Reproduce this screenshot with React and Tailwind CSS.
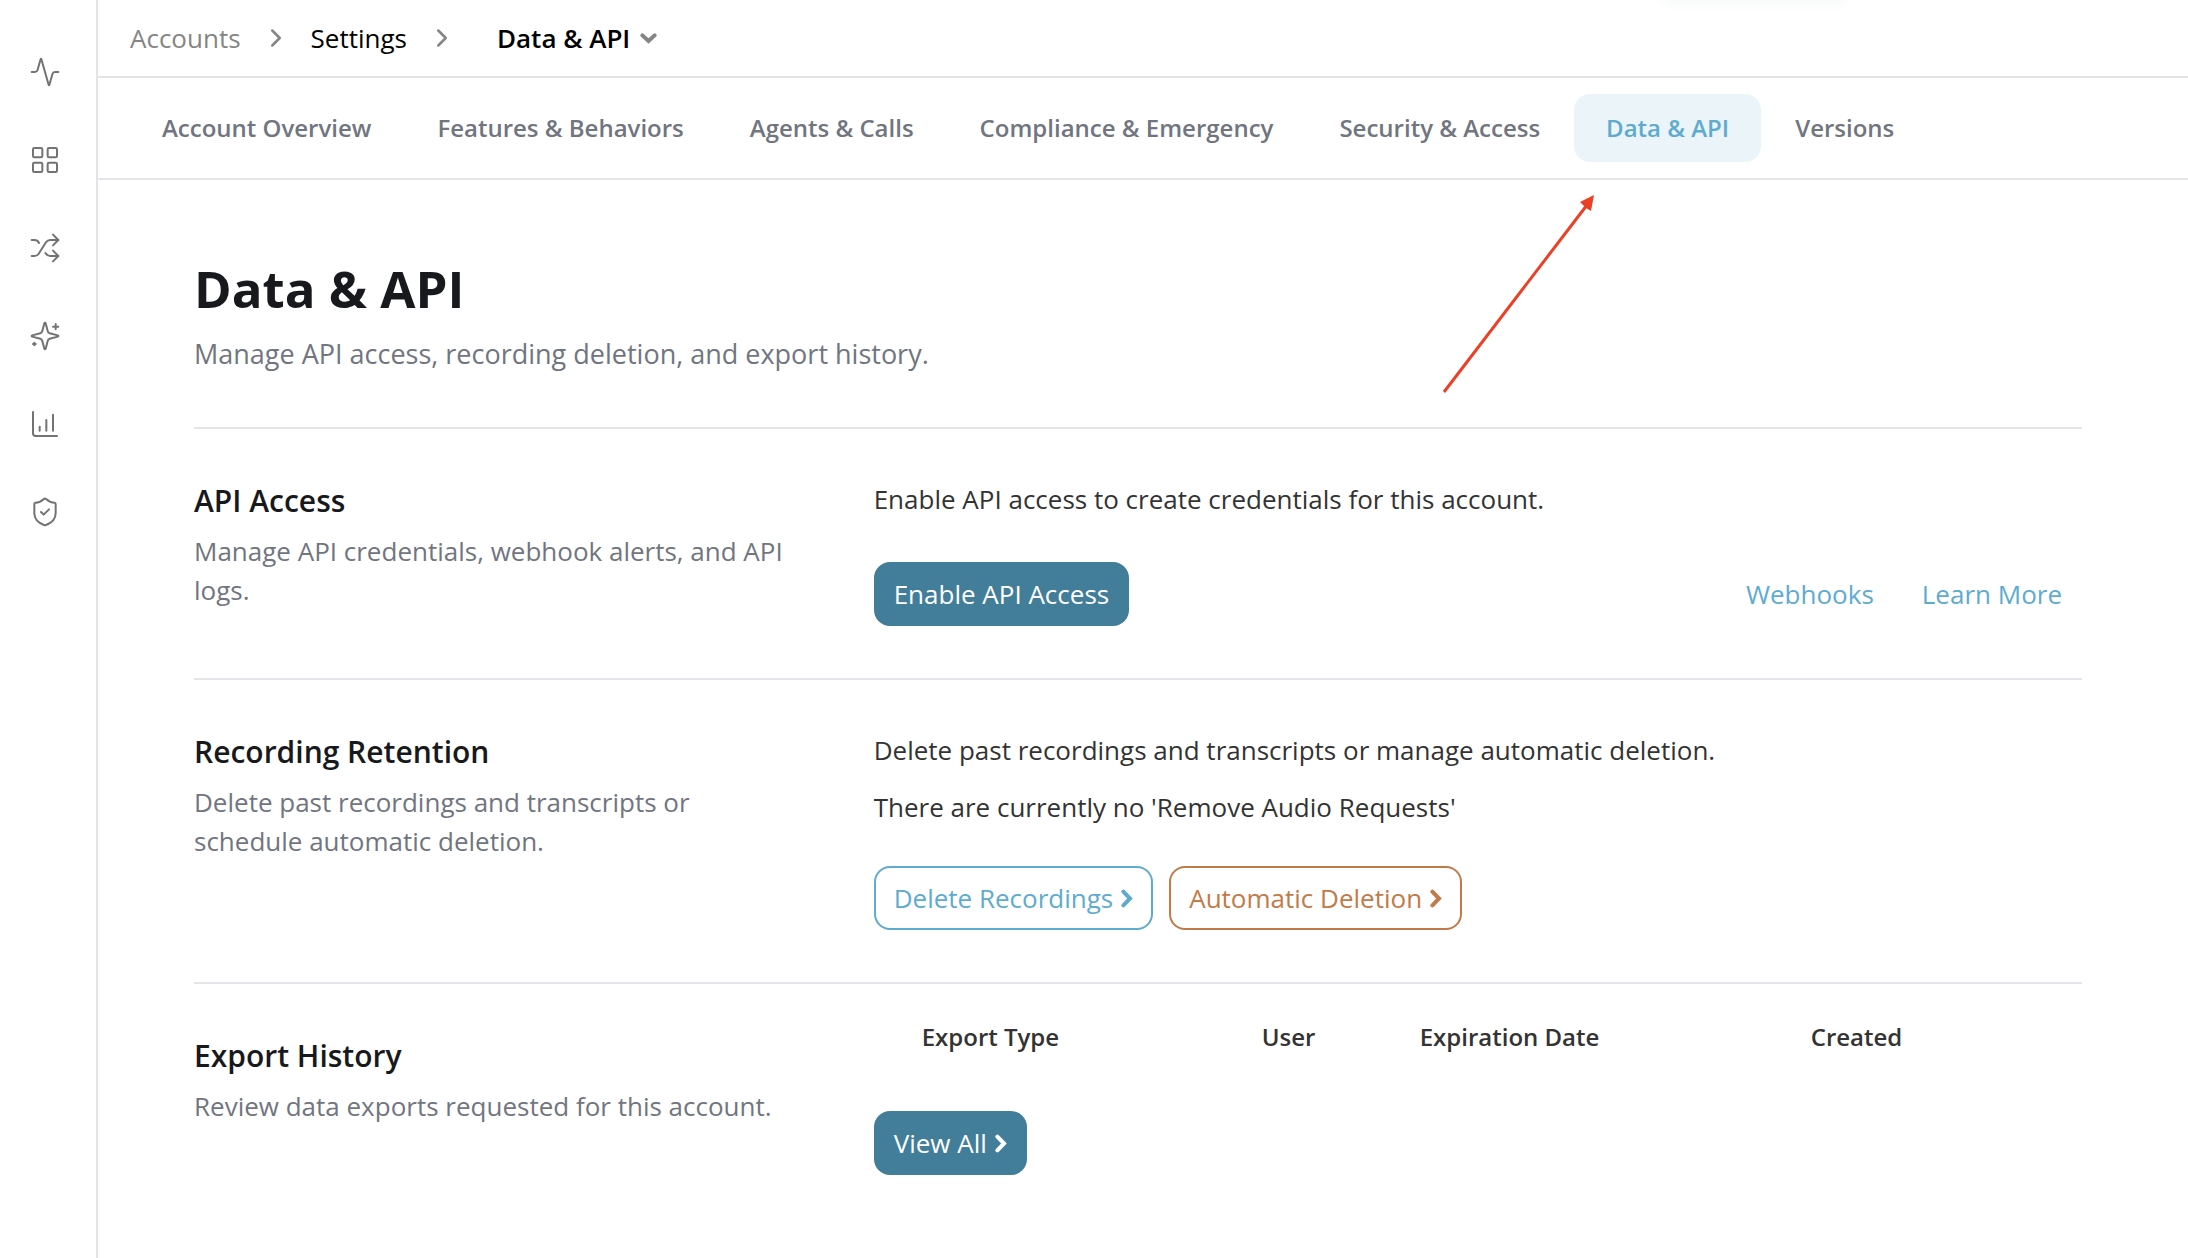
import React from 'react';
import {
  Activity,
  LayoutGrid,
  Shuffle,
  ChartColumnIncreasing,
  ShieldCheck,
  ChevronRight,
} from 'lucide-react';

const Sparkles = ({ size = 24, strokeWidth = 2 }) => (
  <svg
    width={size}
    height={size}
    viewBox="0 0 24 24"
    fill="none"
    stroke="currentColor"
    strokeWidth={strokeWidth}
    strokeLinecap="round"
    strokeLinejoin="round"
  >
    <path d="M9.937 15.5A2 2 0 0 0 8.5 14.063l-6.135-1.582a.5.5 0 0 1 0-.962L8.5 9.936A2 2 0 0 0 9.937 8.5l1.582-6.135a.5.5 0 0 1 .963 0L14.063 8.5A2 2 0 0 0 15.5 9.937l6.135 1.581a.5.5 0 0 1 0 .964L15.5 14.063a2 2 0 0 0-1.437 1.437l-1.582 6.135a.5.5 0 0 1-.963 0z" />
    <path d="M20 3v4" />
    <path d="M22 5h-4" />
    <path d="M4 17v2" />
    <path d="M5 18H3" />
  </svg>
);

const CaretRight = () => (
  <svg width="12" height="19" viewBox="0 0 12 19" fill="none" stroke="currentColor" strokeWidth="4" strokeLinecap="round">
    <path d="M2.4 2.6 9 9.5 2.4 16.4" />
  </svg>
);

const CaretDown = ({ className }) => (
  <svg width="17" height="11" viewBox="0 0 17 11" fill="none" stroke="currentColor" strokeWidth="4" strokeLinecap="round" className={className}>
    <path d="M2.4 2.4 8.5 8 14.6 2.4" />
  </svg>
);

const sideItems = [
  { label: 'Activity', icon: Activity },
  { label: 'Dashboard', icon: LayoutGrid },
  { label: 'Routing', icon: Shuffle },
  { label: 'AI', icon: Sparkles },
  { label: 'Reports', icon: ChartColumnIncreasing },
  { label: 'Compliance', icon: ShieldCheck },
];

const tabs = [
  'Account Overview',
  'Features & Behaviors',
  'Agents & Calls',
  'Compliance & Emergency',
  'Security & Access',
  'Data & API',
  'Versions',
];

const buttonStyles = {
  primary: 'border-[#427d99] bg-[#427d99] text-white',
  info: 'border-[#5eabd0] bg-white text-[#5eabd0]',
  warning: 'border-[#c27a48] bg-white text-[#c27a48]',
};

const Button = ({ variant = 'primary', arrow, children }) => (
  <button
    type="button"
    className={`flex h-16 items-center gap-2 rounded-2xl border-2 px-[18px] text-[26px] whitespace-nowrap ${buttonStyles[variant]}`}
  >
    {children}
    {arrow && <CaretRight />}
  </button>
);

const Section = ({ title, description, children }) => (
  <section className="grid grid-cols-[minmax(0,9fr)_minmax(0,16fr)] border-t-2 border-[#e4e4e9]">
    <div className="pt-[52px] pr-20">
      <h2 className="text-[30px] leading-10 font-semibold text-[#18191c]">{title}</h2>
      <p className="mt-[11px] text-[26px] leading-[39px] text-[#717580]">{description}</p>
    </div>
    {children}
  </section>
);

export default function App() {
  return (
    <div className="flex min-h-screen overflow-hidden bg-white font-['Open_Sans',sans-serif] text-[#333]">
      <aside className="w-[98px] shrink-0 border-r-2 border-[#e4e4e4] pt-14 pl-[29px]">
        <nav className="flex flex-col gap-14 text-[#737373]">
          {sideItems.map(({ label, icon: Icon }) => (
            <a key={label} href="#" aria-label={label}>
              <Icon size={32} strokeWidth={1.5} />
            </a>
          ))}
        </nav>
      </aside>

      <div className="min-w-0 flex-1">
        <header className="relative flex h-[78px] items-center border-b-2 border-[#e4e4e4] pl-8 text-[26px] text-black">
          <a href="#" className="text-[#858585]">Accounts</a>
          <ChevronRight size={30} strokeWidth={2} className="mx-5 text-[#858585]" />
          <a href="#">Settings</a>
          <ChevronRight size={30} strokeWidth={2} className="mx-5 text-[#858585]" />
          <button type="button" className="ml-5 flex items-center gap-[10px] font-semibold">
            Data &amp; API
            <CaretDown className="text-[#858585]" />
          </button>
          <div className="pointer-events-none absolute -top-2 left-[1566px] h-2 w-[182px] rounded-full shadow-[0_2px_12px_rgba(0,60,60,0.06)]" />
        </header>

        <nav className="flex gap-[2px] border-b-2 border-[#e4e4e9] px-8 py-4">
          {tabs.map((tab) => (
            <a
              key={tab}
              href="#"
              className={`flex h-[68px] items-center rounded-2xl px-8 text-2xl font-semibold whitespace-nowrap ${
                tab === 'Data & API' ? 'bg-[#eaf4f9] text-[#5eabd0]' : 'text-[#717580]'
              }`}
            >
              {tab}
            </a>
          ))}
        </nav>

        <main className="relative pr-[106px] pl-24">
          <div className="pt-[77px] pb-[52px]">
            <h1 className="text-[51px] leading-[62px] font-bold text-[#18191c]">Data &amp; API</h1>
            <p className="mt-[14px] text-[27px] leading-[42px] text-[#717580]">
              Manage API access, recording deletion, and export history.
            </p>
          </div>

          <Section
            title="API Access"
            description="Manage API credentials, webhook alerts, and API logs."
          >
            <div className="pt-[51px] pb-[52px] text-[26px] leading-[39px]">
              <p>Enable API access to create credentials for this account.</p>
              <div className="mt-[43px] flex items-center justify-between">
                <Button>Enable API Access</Button>
                <div className="flex gap-12 pr-5 text-[#5eabd0]">
                  <a href="#">Webhooks</a>
                  <a href="#">Learn More</a>
                </div>
              </div>
            </div>
          </Section>

          <Section
            title="Recording Retention"
            description="Delete past recordings and transcripts or schedule automatic deletion."
          >
            <div className="pt-[51px] pb-[52px] text-[26px] leading-[39px]">
              <p>Delete past recordings and transcripts or manage automatic deletion.</p>
              <p className="mt-[18px]">There are currently no 'Remove Audio Requests'</p>
              <div className="mt-[39px] flex gap-4">
                <Button variant="info" arrow>Delete Recordings</Button>
                <Button variant="warning" arrow>Automatic Deletion</Button>
              </div>
            </div>
          </Section>

          <Section
            title="Export History"
            description="Review data exports requested for this account."
          >
            <div className="pt-[35px]">
              <table className="w-full table-fixed text-left text-2xl leading-9">
                <thead>
                  <tr>
                    <th className="w-[340px] pl-12 font-semibold">Export Type</th>
                    <th className="w-[158px] pl-12 font-semibold">User</th>
                    <th className="w-[391px] pl-12 font-semibold">Expiration Date</th>
                    <th className="pl-12 font-semibold">Created</th>
                  </tr>
                </thead>
              </table>
              <div className="mt-14 flex">
                <Button arrow>View All</Button>
              </div>
            </div>
          </Section>

          {/* pointer to the active tab */}
          <svg
            className="pointer-events-none absolute top-[14px] left-[1344px]"
            width="154"
            height="202"
            viewBox="0 0 154 202"
          >
            <path d="M2 198 L145 11" stroke="#eb4025" strokeWidth="3" fill="none" />
            <path d="M152 1 L149 17 L144 14 L138 8 Z" fill="#eb4025" />
          </svg>
        </main>
      </div>
    </div>
  );
}
